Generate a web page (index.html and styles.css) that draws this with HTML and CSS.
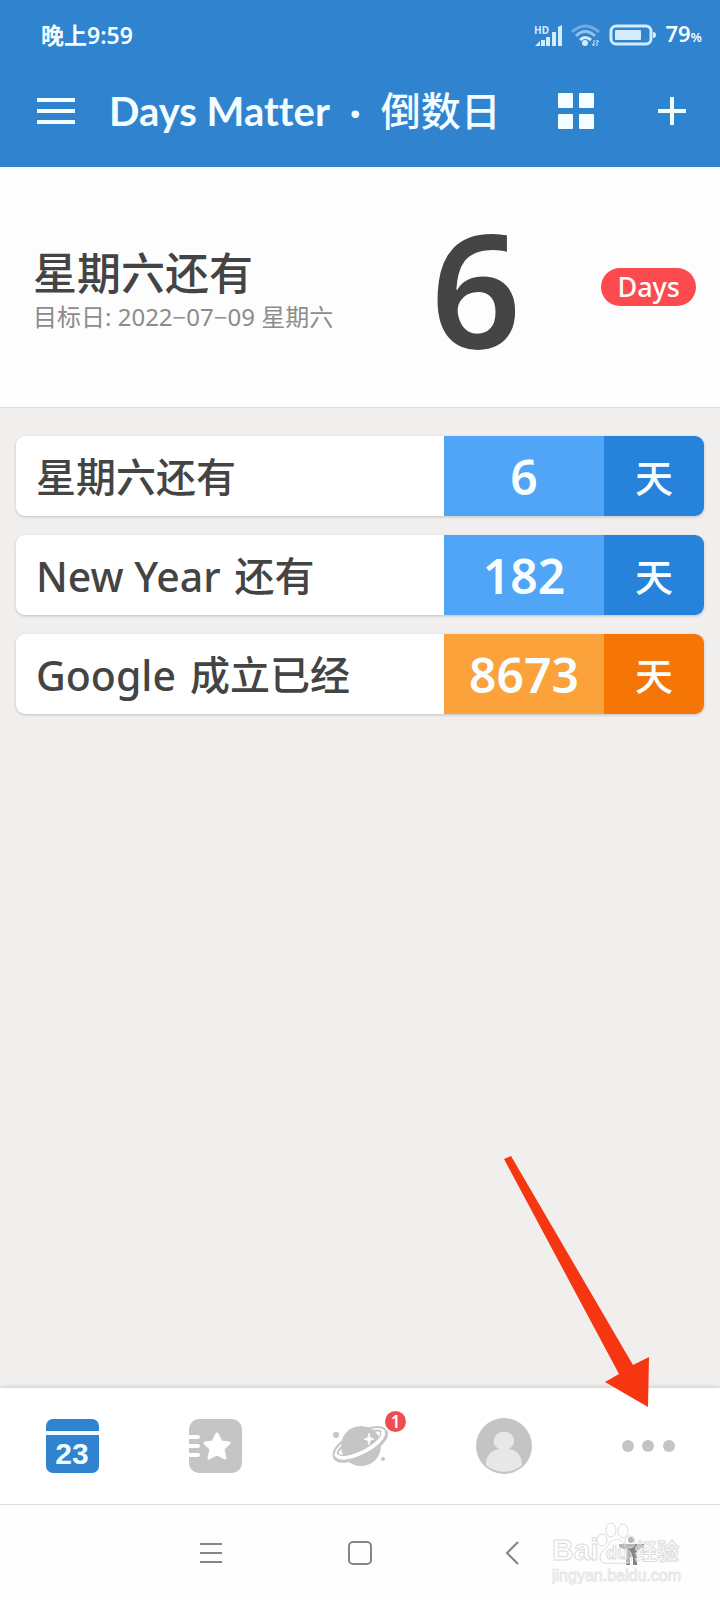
FILE: index.html
```html
<!DOCTYPE html>
<html lang="zh-CN">
<head>
    <meta charset="utf-8">
    <meta name="viewport" content="width=device-width, initial-scale=1">
    <title>Days Matter · 倒数日</title>
    <link rel="stylesheet" href="styles.css">
</head>
<body>
    <header class="header">
        <div class="status-bar">
            <span class="clock">晚上9:59</span>
            <div class="status-icons">
                <svg class="signal" width="29" height="24" viewBox="0 0 29 24">
                    <text x="0" y="11" class="hd-text">HD</text>
                    <path d="M1 23 L6 18 V23Z M7 17h4v6H7z M12 14h4v9h-4z M18 9h4v14h-4z M24 4l4-2v21h-4z"/>
                </svg>
                <svg class="wifi" width="30" height="24" viewBox="0 0 30 24">
                    <g fill="none" stroke-width="3">
                        <path d="M1 9 Q14 -3 28 9" opacity=".4"/>
                        <path d="M5 13 Q14 4 24 13" opacity=".6"/>
                        <path d="M9 17 Q14 12 20 17"/>
                    </g>
                    <circle cx="14" cy="20" r="3"/>
                    <path d="M23 17v6l-2-2M26 23v-6l2 2" fill="none" stroke-width="1"/>
                </svg>
                <svg class="battery" width="48" height="24" viewBox="0 0 48 24">
                    <rect x="2" y="3" width="40" height="18" rx="5" fill="none" stroke-width="3"/>
                    <rect x="6" y="7" width="26" height="10" rx="1"/>
                    <path d="M44 9q3 0 3 3t-3 3z"/>
                </svg>
                <span class="percent">79<small>%</small></span>
            </div>
        </div>
        <div class="title-bar">
            <button class="icon-button" aria-label="菜单">
                <svg width="38" height="28" viewBox="0 0 38 28"><path d="M0 1h38v4H0zM0 12h38v4H0zM0 23h38v4H0z"/></svg>
            </button>
            <h1 class="title"><span>Days Matter</span><span>·</span><span>倒数日</span></h1>
            <div class="actions">
                <button class="icon-button" aria-label="网格">
                    <svg width="36" height="36" viewBox="0 0 36 36">
                        <rect width="15" height="15" rx="1"/><rect x="21" width="15" height="15" rx="1"/>
                        <rect y="21" width="15" height="15" rx="1"/><rect x="21" y="21" width="15" height="15" rx="1"/>
                    </svg>
                </button>
                <button class="icon-button" aria-label="添加">
                    <svg width="28" height="28" viewBox="0 0 28 28"><path d="M12 0h4v12h12v4H16v12h-4V16H0v-4h12z"/></svg>
                </button>
            </div>
        </div>
    </header>

    <section class="hero">
        <div class="hero-text">
            <h2 class="hero-title">星期六还有</h2>
            <p class="hero-date">目标日: 2022−07−09 星期六</p>
        </div>
        <div class="hero-number">6</div>
        <span class="pill">Days</span>
    </section>

    <main class="events">
        <a class="event" href="#">
            <span class="event-name">星期六还有</span>
            <span class="event-count">6</span>
            <span class="event-unit">天</span>
        </a>
        <a class="event" href="#">
            <span class="event-name"><span class="latin">New Year</span> 还有</span>
            <span class="event-count">182</span>
            <span class="event-unit">天</span>
        </a>
        <a class="event past" href="#">
            <span class="event-name"><span class="latin">Google</span> 成立已经</span>
            <span class="event-count">8673</span>
            <span class="event-unit">天</span>
        </a>
    </main>

    <nav class="tabs">
        <button class="tab" aria-label="日历">
            <svg width="64" height="64" viewBox="0 0 64 64">
                <rect x="6" y="5" width="53" height="54" rx="7" fill="#3083cf"/>
                <rect x="6" y="17" width="53" height="4" fill="#f2fbff"/>
                <text x="32" y="50" class="calendar-day">23</text>
            </svg>
        </button>
        <button class="tab" aria-label="收藏">
            <svg width="64" height="64" viewBox="0 0 64 64">
                <rect x="5" y="5" width="53" height="54" rx="10" fill="#c5c5c5"/>
                <path d="M4 23h10M4 32h10M4 41h10" stroke="#fff" stroke-width="4" stroke-linecap="round"/>
                <path d="M33 20l4 8 8 1-6 6 2 9-8-4-8 4 2-9-6-6 8-1z" fill="#fff" stroke="#fff" stroke-width="3" stroke-linejoin="round"/>
            </svg>
        </button>
        <button class="tab" aria-label="发现">
            <span class="badge-wrap">
                <svg width="64" height="64" viewBox="0 0 64 64">
                    <g transform="rotate(-27 32 30)">
                        <ellipse cx="32" cy="30" rx="29" ry="12" fill="none" stroke="#c5c5c5" stroke-width="2"/>
                        <ellipse cx="32" cy="29" rx="24" ry="7" fill="none" stroke="#c5c5c5" stroke-width="2"/>
                    </g>
                    <circle cx="33" cy="32" r="20" fill="#c5c5c5"/>
                    <g transform="rotate(-27 32 30)" fill="none">
                        <path d="M6 29 C6 42 58 42 58 29" stroke="#fff" stroke-width="4"/>
                        <path d="M3 30 C3 46 61 46 61 30" stroke="#c5c5c5" stroke-width="3"/>
                    </g>
                    <path d="M41 19q0 6 5 6-5 0-5 6 0-6-5-6 5 0 5-6z" fill="#fff" stroke="#fff"/>
                    <circle cx="8" cy="21" r="3" fill="#c5c5c5"/>
                    <circle cx="55" cy="45" r="2" fill="#c5c5c5"/>
                </svg>
                <span class="badge">1</span>
            </span>
        </button>
        <button class="tab" aria-label="我的">
            <svg width="64" height="64" viewBox="0 0 64 64">
                <circle cx="32" cy="32" r="28" fill="#c4c4c4"/>
                <path d="M14 51c0-9 4-14 13-16-5-3-6-6-5-9 1-11 19-11 20 0 0 4-1 6-5 9 9 2 13 7 13 16-10 9-26 9-36 0z" fill="#e8e8e8"/>
            </svg>
        </button>
        <button class="tab" aria-label="更多">
            <svg width="64" height="64" viewBox="0 0 64 64" fill="#c4c4c4">
                <circle cx="12" cy="32" r="6"/><circle cx="32" cy="32" r="6"/><circle cx="53" cy="32" r="6"/>
            </svg>
        </button>
        <svg class="arrow" width="146" height="252" viewBox="0 0 146 252">
            <path d="M0 3L7 0 129 209 145 201 144 251 101 226 115 218z" fill="#f63511"/>
        </svg>
    </nav>

    <footer class="system-nav">
        <button class="system-button" aria-label="最近任务">
            <svg width="24" height="24" viewBox="0 0 24 24"><path d="M1 3h22M1 12h22M1 21h22"/></svg>
        </button>
        <button class="system-button" aria-label="主屏幕">
            <svg width="26" height="26" viewBox="0 0 26 26"><rect x="2" y="2" width="22" height="22" rx="4"/></svg>
        </button>
        <button class="system-button" aria-label="返回">
            <svg width="16" height="26" viewBox="0 0 16 26"><path d="M14 2L3 13l11 11"/></svg>
        </button>
        <button class="system-button" aria-label="无障碍">
            <svg width="28" height="34" viewBox="0 0 28 34">
                <path d="M1 8h25v3l-7 3v15h-4v-8h-3v8H8V14l-7-3z" fill="#858585" stroke="none"/>
                <circle cx="13" cy="4" r="3" fill="#858585" stroke="none"/>
            </svg>
        </button>
        <svg class="watermark" width="132" height="64" viewBox="0 0 132 64">
            <text x="0" y="38" class="mark-latin">Bai</text>
            <path d="M48 36c0-8 7-9 9-14 3-6 12-6 15 0 2 6 8 6 8 14 0 6-6 6-15 5-11 1-17 1-17-5z"/>
            <ellipse cx="50" cy="18" rx="5" ry="6"/>
            <ellipse cx="59" cy="8" rx="5" ry="7"/>
            <ellipse cx="71" cy="9" rx="5" ry="7"/>
            <ellipse cx="78" cy="20" rx="5" ry="6"/>
            <text x="54" y="37" class="mark-du">du</text>
            <text x="83" y="37" class="mark-cjk">经验</text>
            <text x="0" y="59" class="mark-url">jingyan.baidu.com</text>
        </svg>
    </footer>
</body>
</html>
```
FILE: styles.css
```css
* {
    box-sizing: border-box;
}
body {
    margin: 0;
    min-height: 100vh;
    display: flex;
    flex-direction: column;
    font-family: "Noto Sans", "Noto Sans CJK SC", sans-serif;
    color: #444;
    background: #f0efee;
}
h1, h2, p {
    margin: 0;
}
button {
    padding: 0;
    border: 0;
    background: none;
    font: inherit;
    cursor: pointer;
}
svg {
    display: block;
}

/* header */
.header {
    padding-bottom: 15px;
    color: #f4fdff;
    background: #3083cf;
}
.status-bar {
    display: flex;
    justify-content: space-between;
    align-items: center;
    height: 70px;
    padding: 0 18px 0 41px;
    font-size: 23px;
    font-weight: 600;
    line-height: 30px;
}
.status-icons {
    display: flex;
    align-items: center;
    gap: 8px;
    fill: #d5ecfc;
    stroke: none;
}
.wifi, .battery {
    stroke: #d5ecfc;
}
.wifi circle, .battery rect:nth-child(2), .battery path {
    stroke: none;
}
.hd-text {
    font-size: 10px;
    font-weight: 700;
}
.percent {
    font-size: 22px;
}
.percent small {
    font-size: 13px;
}
.title-bar {
    display: flex;
    align-items: center;
    height: 82px;
    padding: 0 34px 0 37px;
}
.icon-button {
    fill: #f4fdff;
}
.title {
    display: flex;
    gap: 20px;
    margin-left: 34px;
    font-family: Lato, "Noto Sans CJK SC", sans-serif;
    font-size: 40px;
    font-weight: 700;
    font-variant-ligatures: none;
    line-height: 60px;
}
.title span:last-child {
    font-weight: 500;
}
.actions {
    display: flex;
    align-items: center;
    gap: 64px;
    margin-left: auto;
}

/* next event */
.hero {
    display: grid;
    grid-template-columns: 1fr 160px 140px;
    align-items: center;
    height: 241px;
    padding: 0 24px 0 33px;
    background: #fdfdfd;
    border-bottom: 1px solid #dedede;
}
.hero-text {
    padding-top: 8px;
}
.hero-title {
    font-size: 44px;
    font-weight: 500;
    line-height: 52px;
}
.hero-date {
    font-size: 24px;
    line-height: 36px;
    color: #8c8c8c;
}
.hero-number {
    font-size: 158px;
    font-weight: 600;
    line-height: 160px;
    text-align: center;
}
.pill {
    justify-self: end;
    padding: 0 16px;
    border-radius: 19px;
    font-size: 27px;
    font-weight: 500;
    line-height: 38px;
    color: #fff;
    background: #fd4a4f;
}

/* event list */
.events {
    flex: 1;
    display: flex;
    flex-direction: column;
    gap: 19px;
    padding: 28px 16px;
}
.event {
    display: grid;
    grid-template-columns: 1fr 160px 100px;
    height: 80px;
    border-radius: 9px;
    overflow: hidden;
    line-height: 82px;
    color: #444;
    background: #fff;
    text-decoration: none;
    box-shadow: 0 1px 3px rgba(0, 0, 0, 0.2);
}
.event-name {
    display: flex;
    gap: 14px;
    padding-left: 20px;
    font-size: 40px;
    font-weight: 500;
}
.latin {
    font-size: 41px;
}
.event-count, .event-unit {
    text-align: center;
    color: #f8feff;
}
.event-count {
    font-size: 48px;
    font-weight: 600;
    background: #51a5f7;
}
.event-unit {
    font-size: 38px;
    font-weight: 500;
    background: #2682da;
}
.past .event-count {
    background: #fba23b;
}
.past .event-unit {
    background: #f57507;
}

/* bottom tabs */
.tabs {
    position: relative;
    display: grid;
    grid-template-columns: repeat(5, 1fr);
    height: 116px;
    background: #fff;
    box-shadow: 0 -1px 4px rgba(0, 0, 0, 0.15);
}
.tab {
    display: flex;
    justify-content: center;
    align-items: center;
}
.calendar-day {
    font: 700 30px "Liberation Sans", sans-serif;
    text-anchor: middle;
    fill: #f2fbff;
}
.badge-wrap {
    position: relative;
}
.badge {
    position: absolute;
    top: -3px;
    right: -14px;
    width: 21px;
    height: 21px;
    border-radius: 50%;
    font-size: 17px;
    font-weight: 600;
    line-height: 21px;
    color: #fff;
    background: #ef4d52;
}
.arrow {
    position: absolute;
    right: 70px;
    bottom: 96px;
    pointer-events: none;
}

/* system navigation */
.system-nav {
    position: relative;
    display: grid;
    grid-template-columns: 150fr 148fr 156fr 84fr;
    height: 96px;
    padding: 0 46px 0 136px;
    background: #fefefe;
    border-top: 1px solid #dfdfdf;
}
.system-button {
    display: flex;
    justify-content: center;
    align-items: center;
    fill: none;
    stroke: #858585;
    stroke-width: 2;
}
.watermark {
    position: absolute;
    right: 36px;
    bottom: 14px;
    fill: #fff;
    fill-opacity: 0.4;
    stroke: #dcdcdc;
    pointer-events: none;
}
.mark-latin {
    font: 700 30px "Liberation Sans", sans-serif;
}
.mark-du {
    font: 700 18px "Liberation Sans", sans-serif;
}
.mark-cjk {
    font: 700 22px "Noto Sans CJK SC", sans-serif;
}
.mark-url {
    font: 400 16px "Liberation Sans", sans-serif;
    stroke: #e6e6e6;
}
```
